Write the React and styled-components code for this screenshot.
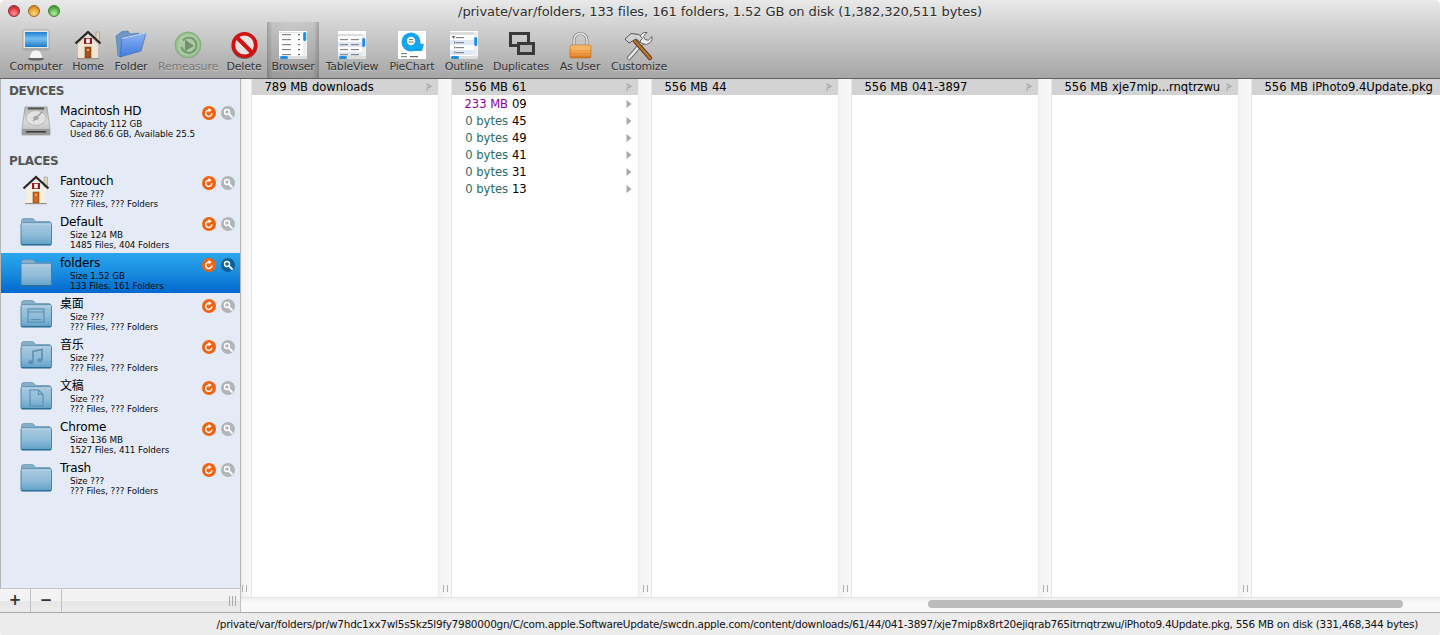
import React from "react";
import styled, { createGlobalStyle } from "styled-components";

const Global = createGlobalStyle`
  html, body { margin: 0; padding: 0; background: #fff; overflow: hidden; }
  * { box-sizing: border-box; }
`;

const FONT = '"DejaVu Sans", "Noto Sans CJK SC", sans-serif';

const Window = styled.div`
  width: 1440px; height: 635px; display: flex; flex-direction: column;
  font-family: ${FONT}; color: #000; overflow: hidden;
  border-radius: 5px 5px 4px 4px; background: #ececec;
`;
const Header = styled.header`
  height: 78px; flex: none; display: flex; flex-direction: column;
  background: linear-gradient(180deg, #e9e9e9 0%, #d4d4d4 30%, #bdbdbd 65%, #a6a6a6 100%);
`;
const TitleBar = styled.div`
  height: 22px; flex: none; display: flex; align-items: center; padding-left: 8px; position: relative;
`;
const Lights = styled.div`display: flex; gap: 8px;`;
const Light = styled.span`
  width: 12px; height: 12px; border-radius: 50%;
  border: 1px solid ${(p) => p.$edge};
  background: radial-gradient(circle at 50% 75%, ${(p) => p.$glow} 0%, ${(p) => p.$c} 55%, ${(p) => p.$dark} 100%);
`;
const Title = styled.div`
  position: absolute; left: 0; right: 0; top: 0; height: 22px; line-height: 23px; text-align: center;
  font-size: 13px; letter-spacing: -0.08px; color: #2e2e2e; text-shadow: 0 1px 0 rgba(255,255,255,.5);
`;
const Toolbar = styled.div`display: flex; flex: 1; padding-left: 8px;`;
const Tool = styled.div`
  width: ${(p) => p.$w}px; margin-left: ${(p) => p.$ml || 0}px; padding-top: 7px;
  display: flex; flex-direction: column; align-items: center;
  background: ${(p) => (p.$active ? "linear-gradient(90deg, rgba(0,0,0,.24), rgba(0,0,0,.08) 10%, rgba(0,0,0,.05) 50%, rgba(0,0,0,.08) 90%, rgba(0,0,0,.24))" : "none")};
`;
const ToolIcon = styled.div`
  width: 32px; height: 32px; display: flex; align-items: center; justify-content: center;
  & svg { display: block; overflow: visible; }
`;
const ToolLabel = styled.div`
  font-size: 11px; line-height: 12px; white-space: nowrap; letter-spacing: -0.2px;
  color: ${(p) => (p.$dim ? "#777" : "#333")}; text-shadow: 0 1px 0 rgba(255,255,255,.35);
`;
const Main = styled.div`
  flex: 1; min-height: 0; display: flex; border-top: 1px solid #5f5f5f; background: #fff;
`;
const Sidebar = styled.aside`
  width: 241px; flex: none; display: flex; flex-direction: column;
`;
const SideList = styled.div`
  flex: 1; min-height: 0; background: #e4ebf6;
  border-left: 1px solid #b4b4b4; border-right: 1px solid #b4b4b4;
`;
const SectionLabel = styled.div`
  height: ${(p) => p.$h}px; padding-left: 8px; display: flex; align-items: flex-end; padding-bottom: 3px;
  font-size: 12px; font-weight: bold; letter-spacing: -0.35px; color: #555; line-height: 14px;
`;
const Row = styled.div`
  height: 40px; margin-bottom: 1px; display: flex; padding: 3px 5px 0 19px;
  background: ${(p) => (p.$sel ? "linear-gradient(180deg, #2aa6ee 0%, #1c8fe0 45%, #0068ce 100%)" : "none")};
`;
const RowIcon = styled.div`
  width: 32px; height: 32px; flex: none;
  & svg { display: block; overflow: visible; }
`;
const RowText = styled.div`flex: 1; min-width: 0; margin-left: 8px;`;
const RowName = styled.div`font-size: 12px; line-height: 15px; letter-spacing: -0.15px; white-space: nowrap; color: #000;`;
const RowDetail = styled.div`
  font-size: 8.8px; line-height: 10px; margin-left: 10px; white-space: nowrap; letter-spacing: -0.1px; color: #0c0c0c;
`;
const RowActions = styled.div`display: flex; gap: 5px; margin-top: 2px; height: 14px; flex: none;`;
const SideFoot = styled.div`
  height: 24px; flex: none; display: flex; border-top: 1px solid #c4c4c4;
  background: linear-gradient(180deg, #f4f4f4 0%, #f2f2f2 50%, #e6e6e6 51%, #ececec 100%);
`;
const FootBtn = styled.div`
  width: 31px; flex: none; display: flex; align-items: center; justify-content: center;
  border-right: 1px solid #c2c2c2; font-size: 15px; font-weight: bold; color: #333; line-height: 1;
`;
const FootFill = styled.div`flex: 1; display: flex; align-items: center; justify-content: flex-end; padding-right: 4px; border-right: 1px solid #c2c2c2;`;
const Grip = styled.div`
  width: 7px; height: 10px; border-left: 1px solid #aaa; border-right: 1px solid #aaa;
  &::after { content: ""; display: block; width: 1px; height: 10px; background: #aaa; margin-left: 2px; }
`;
const Browser = styled.section`flex: 1; min-width: 0; display: flex; flex-direction: column;`;
const Columns = styled.div`flex: 1; min-height: 0; display: flex; overflow: hidden;`;
const Gutter = styled.div`
  width: ${(p) => p.$w}px; flex: none; display: flex; align-items: flex-end; padding: 0 0 5px ${(p) => p.$pad}px;
  background: linear-gradient(90deg, #f3f3f3, #f9f9f9);
  border-left: 1px solid #ececec; border-right: 1px solid #e8e8e8;
`;
const Handle = styled.div`width: 5px; height: 7px; border-left: 1px solid #b0b0b0; border-right: 1px solid #b0b0b0;`;
const Column = styled.div`width: ${(p) => p.$w}px; flex: none; display: flex; flex-direction: column;`;
const ColRow = styled.div`
  height: ${(p) => (p.$head ? 16 : 17)}px; display: flex; align-items: center; padding-right: 6px; flex: none;
  font-size: 11.6px; letter-spacing: -0.05px; white-space: nowrap;
  background: ${(p) => (p.$head ? "#d3d3d3" : "none")};
`;
const Size = styled.span`
  width: 56px; flex: none; text-align: right; color: ${(p) => p.$c || "#000"};
`;
const Name = styled.span`flex: 1; min-width: 0; margin-left: 4px;`;
const Track = styled.div`
  height: 15px; flex: none; display: flex; align-items: flex-start; padding-top: 2px;
  background: linear-gradient(180deg, #f0f0f0, #fafafa 40%, #f6f6f6); border-top: 1px solid #e3e3e3;
`;
const Thumb = styled.div`width: 475px; height: 8px; margin-left: 687px; border-radius: 4px; background: #bbb;`;
const Status = styled.footer`
  height: 23px; flex: none; display: flex; align-items: center; justify-content: flex-end; padding-right: 22px;
  background: #ececec; border-top: 1px solid #a8a8a8;
  font-size: 10.5px; letter-spacing: -0.26px; color: #111; white-space: nowrap;
`;

function Arrow(props) {
  return (
    <svg width="6" height="8" viewBox="0 0 6 8">
      <path d={props.head ? "M.5 .5 5.5 3.5 1.2 5V8" : "M.5 0 5.5 4 .5 8Z"} fill={props.head ? "#bdbdbd" : "#a9a9a9"} stroke={props.head ? "#9a9a9a" : "none"} strokeWidth=".7" />
    </svg>
  );
}

function Computer() {
  return (
    <svg width="32" height="32" viewBox="0 0 32 32">
      <defs>
        <linearGradient id="g-screen" x1="0" y1="0" x2="0" y2="1">
          <stop offset="0" stopColor="#1f7fd0" />
          <stop offset=".45" stopColor="#78bfee" />
          <stop offset="1" stopColor="#1d79c6" />
        </linearGradient>
      </defs>
      <ellipse cx="16" cy="30" rx="8" ry="1.6" fill="#000" opacity=".45" />
      <path d="M10 29c0-5 3-8 6-8s6 3 6 8z" fill="#f4f4f4" />
      <rect x="3" y="1" width="26" height="20" rx="1" fill="#e6e6e6" stroke="#8a8a8a" strokeWidth=".6" />
      <rect x="5" y="3" width="22" height="15" fill="url(#g-screen)" />
      <rect x="3.3" y="19" width="25.4" height="2" fill="#aaa" />
    </svg>
  );
}

function House(props) {
  const door = props.door || "#a9501f";
  const wall = props.wall || "#efe5d2";
  return (
    <svg width="32" height="32" viewBox="0 0 32 32">
      <rect x="24" y="3" width="3.4" height="10" fill="#e2d4bc" stroke="#776" strokeWidth=".4" />
      <path d="M6 15 16 6 26 15V29H6Z" fill={wall} />
      <path d="M3.5 14.5 16 3 28.5 14.5" fill="none" stroke="#2b2420" strokeWidth="2.2" />
      <rect x="12" y="9" width="8" height="6" fill="#8d1f22" />
      <rect x="14.2" y="9.8" width="3.6" height="4.4" fill="#f1f1f1" />
      <rect x="13" y="18" width="6" height="11" fill={door} stroke="#5b2c12" strokeWidth=".5" />
      <rect x="15" y="20" width="2" height="2" fill="#e5b05e" />
      <rect x="5" y="29" width="22" height="1.2" fill="#9a9385" />
    </svg>
  );
}

function BlueFolder() {
  return (
    <svg width="32" height="32" viewBox="0 0 32 32">
      <defs>
        <linearGradient id="g-blue" x1="0" y1="0" x2="0" y2="1">
          <stop offset="0" stopColor="#8cb4f2" />
          <stop offset="1" stopColor="#3f7be0" />
        </linearGradient>
      </defs>
      <path d="M1 7 7 2.5 13 2 15 5 24 4 23 9 6 28 3 27Z" fill="#6f96c8" stroke="#4a6a98" strokeWidth=".5" />
      <path d="M7 9.5 31 4 26 22 5 28Z" fill="url(#g-blue)" stroke="#3565b5" strokeWidth=".6" />
      <path d="M7 9.5 31 4" stroke="#cfe0fb" strokeWidth="1" />
    </svg>
  );
}

function Remeasure() {
  return (
    <svg width="32" height="32" viewBox="0 0 32 32" opacity=".9">
      <circle cx="16" cy="16" r="13" fill="#8fbb85" stroke="#79a673" strokeWidth=".8" />
      <circle cx="16" cy="16" r="11" fill="#a6cd9c" />
      <path d="M11 11.5A7.6 7.6 0 1 1 9.5 18" fill="none" stroke="#6e8f6b" strokeWidth="1.8" />
      <path d="M13 10.5 22 17 13 22Z" fill="#6f8a6b" />
    </svg>
  );
}

function NoSign() {
  return (
    <svg width="32" height="32" viewBox="0 0 32 32">
      <circle cx="16.5" cy="17" r="13" fill="#222" opacity=".5" />
      <circle cx="16.5" cy="16" r="11" fill="#e9e4e2" />
      <path d="M8.5 8 24.5 24" stroke="#d21212" strokeWidth="4" />
      <circle cx="16.5" cy="16" r="11.2" fill="none" stroke="#d21212" strokeWidth="3.6" />
    </svg>
  );
}

function Lines(props) {
  const c = props.c || "#888";
  return (
    <>
      {props.ys.map((y) => (
        <rect key={y} x={props.x} y={y} width={props.w} height="1.2" fill={c} />
      ))}
    </>
  );
}

function Slider(props) {
  return (
    <>
      <rect x="24" y={props.top} width="3.6" height={25 - props.top} fill="#eee" />
      <rect x="24.2" y={props.knob} width="3" height="9" rx="1.5" fill="#1f8fe0" />
      <rect y="25" width="28" height="3" fill="#ddd" />
      <rect x="1" y="25" width="8" height="3" rx="1.5" fill="#1f8fe0" />
    </>
  );
}

function ThumbBrowser() {
  return (
    <svg width="28" height="28" viewBox="0 0 28 28">
      <rect width="28" height="28" fill="#fff" />
      <rect y="1" width="28" height="1" fill="#e4e4e4" />
      <Lines x={3} ys={[3, 8, 13, 18, 23]} w={9} />
      <Lines x={19} ys={[3, 8, 13, 18, 23]} w={2} c="#666" />
      <Slider top={1} knob={1} />
    </svg>
  );
}

function ThumbTable() {
  return (
    <svg width="28" height="28" viewBox="0 0 28 28">
      <rect width="28" height="28" fill="#fff" />
      <rect y="11" width="24" height="5" fill="#dfe8f6" />
      <rect y="21" width="24" height="4" fill="#dfe8f6" />
      <rect y="3" width="24" height="2" fill="#ddd" />
      <Lines x={2} ys={[8, 13, 18, 23]} w={8} />
      <Lines x={13} ys={[8, 13, 18, 23]} w={8} />
      <Slider top={3} knob={7} />
    </svg>
  );
}

function ThumbPie() {
  return (
    <svg width="28" height="28" viewBox="0 0 28 28">
      <rect width="28" height="28" fill="#fff" />
      <circle cx="13" cy="11" r="9.5" fill="#13a6ee" />
      <path d="M17 12 26 13 24 20 15 20Z" fill="#13a6ee" />
      <circle cx="13" cy="10" r="4.2" fill="#f2fbff" />
      <rect x="11" y="8" width="4" height="1" fill="#777" />
      <rect x="10.5" y="10.5" width="5" height="1" fill="#777" />
      <Lines x={3} ys={[22, 25]} w={6} c="#888" />
      <Lines x={12} ys={[25]} w={8} c="#666" />
    </svg>
  );
}

function ThumbOutline() {
  return (
    <svg width="28" height="28" viewBox="0 0 28 28">
      <rect width="28" height="28" fill="#fff" />
      <rect y="1" width="24" height="3" fill="#ddd" />
      <rect y="9" width="24" height="5" fill="#dfe8f6" />
      <rect y="19" width="24" height="5" fill="#dfe8f6" />
      <Lines x={6} ys={[6, 11, 16, 21]} w={8} />
      <path d="M2 5h3L3.5 8Z" fill="#555" />
      <path d="M4 10v3l2-1.5ZM4 15v3l2-1.5ZM4 20v3l2-1.5Z" fill="#888" />
      <Slider top={1} knob={6} />
    </svg>
  );
}

function Duplicates() {
  return (
    <svg width="32" height="32" viewBox="0 0 32 32">
      <path d="M12 16.5H5.5V4.5H23.5V13" fill="none" stroke="#383838" strokeWidth="3" />
      <rect x="13.5" y="14.5" width="15" height="10" fill="#b3b3b3" stroke="#383838" strokeWidth="3" />
    </svg>
  );
}

function Lock() {
  return (
    <svg width="32" height="32" viewBox="0 0 32 32">
      <defs>
        <linearGradient id="g-lock" x1="0" y1="0" x2="0" y2="1">
          <stop offset="0" stopColor="#f6c274" />
          <stop offset=".5" stopColor="#ef9b3a" />
          <stop offset="1" stopColor="#d9721d" />
        </linearGradient>
      </defs>
      <path d="M10 17V11a6.5 6.5 0 0 1 13 0v6" fill="none" stroke="#8f8f8f" strokeWidth="3.2" />
      <path d="M10 17V11a6.5 6.5 0 0 1 13 0v6" fill="none" stroke="#e9e9e9" strokeWidth="1.4" />
      <rect x="6" y="16" width="21" height="13" rx="1.5" fill="url(#g-lock)" stroke="#b96a22" strokeWidth=".6" />
      <path d="M6.5 20H26.5M6.5 23H26.5M6.5 26H26.5" stroke="#fff" strokeOpacity=".25" strokeWidth=".8" />
    </svg>
  );
}

function Tools() {
  return (
    <svg width="32" height="32" viewBox="0 0 32 32">
      <path d="M6 29 20 13" stroke="#666" strokeWidth="4.2" strokeLinecap="round" />
      <path d="M6 29 20 13" stroke="#eaeaea" strokeWidth="2.6" strokeLinecap="round" />
      <path d="M18 14a6.5 6.5 0 0 1 6-10.5L20.5 7.5l1.5 3 3.5.8 3.5-4a6.5 6.5 0 0 1-9 7.5Z" fill="#f0f0f0" stroke="#666" strokeWidth="1" />
      <path d="M27 29 12 12" stroke="#5a3415" strokeWidth="4.2" strokeLinecap="round" />
      <path d="M27 29 12 12" stroke="#b87530" strokeWidth="2.6" strokeLinecap="round" />
      <path d="M2 10 8 4.5l8 1 3.5 4-3 3-3.5-2.6-4 2.4L6 14Z" fill="#d2d2d2" stroke="#555" strokeWidth="1" />
    </svg>
  );
}

function HardDrive() {
  return (
    <svg width="32" height="32" viewBox="0 0 32 32">
      <defs>
        <linearGradient id="g-hd" x1="0" y1="0" x2="0" y2="1">
          <stop offset="0" stopColor="#b4b4b4" />
          <stop offset=".5" stopColor="#dcdcdc" />
          <stop offset="1" stopColor="#b8b8b8" />
        </linearGradient>
      </defs>
      <path d="M5 3H27L30 25V31H2V25Z" fill="url(#g-hd)" stroke="#8d8d8d" strokeWidth=".6" />
      <rect x="8" y="3.5" width="16" height="2" fill="#555" />
      <ellipse cx="16" cy="14" rx="10" ry="7.5" fill="#e2e2e2" stroke="#a5a5a5" strokeWidth=".6" />
      <ellipse cx="16" cy="14" rx="2.5" ry="1.8" fill="#bbb" stroke="#888" strokeWidth=".5" />
      <path d="M22 8 13 17" stroke="#999" strokeWidth="1.2" />
      <rect x="2" y="25" width="28" height="6" fill="#9a9a9a" />
      <rect x="6" y="27" width="20" height="1.6" fill="#3e3e3e" />
    </svg>
  );
}

function Folder(props) {
  const g = "#5c8fb2";
  const glyph = props.glyph;
  return (
    <svg width="32" height="32" viewBox="0 0 32 32">
      <defs>
        <linearGradient id="g-folder" x1="0" y1="0" x2="0" y2="1">
          <stop offset="0" stopColor="#a9c9df" />
          <stop offset=".55" stopColor="#8fbbd9" />
          <stop offset="1" stopColor="#5fa0c6" />
        </linearGradient>
      </defs>
      <path d="M1.5 9V5.5Q1.5 3.5 4 3.5H12Q13.5 3.5 14.5 5L15.5 6.5H29Q31 6.5 31 8.5V12H1.5Z" fill="#86aecb" stroke="#5d8cab" strokeWidth=".6" />
      <rect x="1" y="8" width="30.5" height="22" rx="1.5" fill="url(#g-folder)" stroke="#3c7da4" strokeWidth=".9" />
      <path d="M1.5 8.8H31" stroke="#d2e4f0" strokeWidth=".8" />
      <path d="M1.5 29.6H31" stroke="#2b6c94" strokeWidth="1.2" />
      {glyph === "desktop" ? (
        <g>
          <rect x="8" y="12" width="16" height="13" fill="none" stroke={g} strokeWidth="1.2" />
          <path d="M8 15H24M11 22.5H21" stroke={g} strokeWidth="1.2" />
        </g>
      ) : null}
      {glyph === "music" ? (
        <g>
          <path d="M13 24V13.5L22 11.5V22" fill="none" stroke={g} strokeWidth="1.6" />
          <ellipse cx="10.8" cy="24.3" rx="2.6" ry="2" fill={g} />
          <ellipse cx="19.8" cy="22.3" rx="2.6" ry="2" fill={g} />
        </g>
      ) : null}
      {glyph === "doc" ? (
        <path d="M10 11H18.5L23 15.5V27H10ZM18.5 11V15.5H23" fill="none" stroke={g} strokeWidth="1.2" />
      ) : null}
    </svg>
  );
}

function Refresh() {
  return (
    <svg width="14" height="14" viewBox="0 0 14 14">
      <circle cx="7" cy="7" r="7" fill="#f3620f" />
      <path d="M9.9 7.3A3.1 3.1 0 1 1 7 4.2" fill="none" stroke="#fff" strokeWidth="1.5" />
      <path d="M6.6 1.8 9.6 4.2 6.6 6.4Z" fill="#fff" />
    </svg>
  );
}

function Search(props) {
  return (
    <svg width="14" height="14" viewBox="0 0 14 14">
      <circle cx="7" cy="7" r="7" fill={props.sel ? "#0f5e9c" : "#b1b4b8"} />
      <circle cx="6" cy="6" r="2.5" fill="none" stroke="#fff" strokeWidth="1.4" />
      <path d="M8 8 11 11" stroke="#fff" strokeWidth="1.8" strokeLinecap="round" />
    </svg>
  );
}

const tools = [
  { label: "Computer", w: 56, icon: <Computer /> },
  { label: "Home", w: 48, icon: <House /> },
  { label: "Folder", w: 38, icon: <BlueFolder /> },
  { label: "Remeasure", w: 76, icon: <Remeasure />, dim: true },
  { label: "Delete", w: 36, icon: <NoSign /> },
  { label: "Browser", w: 52, ml: 5, active: true, icon: <ThumbBrowser /> },
  { label: "TableView", w: 66, icon: <ThumbTable /> },
  { label: "PieChart", w: 54, icon: <ThumbPie /> },
  { label: "Outline", w: 50, icon: <ThumbOutline /> },
  { label: "Duplicates", w: 64, icon: <Duplicates /> },
  { label: "As User", w: 54, icon: <Lock /> },
  { label: "Customize", w: 64, icon: <Tools /> },
];

const places = [
  { name: "Fantouch", a: "Size ???", b: "??? Files, ??? Folders", icon: <House door="#d9671d" wall="#f5efe2" /> },
  { name: "Default", a: "Size 124 MB", b: "1485 Files, 404 Folders", icon: <Folder /> },
  { name: "folders", a: "Size 1.52 GB", b: "133 Files, 161 Folders", icon: <Folder />, sel: true },
  { name: "桌面", a: "Size ???", b: "??? Files, ??? Folders", icon: <Folder glyph="desktop" /> },
  { name: "音乐", a: "Size ???", b: "??? Files, ??? Folders", icon: <Folder glyph="music" /> },
  { name: "文稿", a: "Size ???", b: "??? Files, ??? Folders", icon: <Folder glyph="doc" /> },
  { name: "Chrome", a: "Size 136 MB", b: "1527 Files, 411 Folders", icon: <Folder /> },
  { name: "Trash", a: "Size ???", b: "??? Files, ??? Folders", icon: <Folder /> },
];

const TEAL = "#2b6b6b";
const columns = [
  { head: ["789 MB", "downloads"], rows: [] },
  {
    head: ["556 MB", "61"],
    rows: [
      ["233 MB", "09", "#8a00a8"],
      ["0 bytes", "45", TEAL],
      ["0 bytes", "49", TEAL],
      ["0 bytes", "41", TEAL],
      ["0 bytes", "31", TEAL],
      ["0 bytes", "13", TEAL],
    ],
  },
  { head: ["556 MB", "44"], rows: [] },
  { head: ["556 MB", "041-3897"], rows: [] },
  { head: ["556 MB", "xje7mip...rnqtrzwu"], rows: [] },
  { head: ["556 MB", "iPhoto9.4Update.pkg"], rows: [], last: true },
];

function SideRow(props) {
  return (
    <Row $sel={props.sel}>
      <RowIcon>{props.icon}</RowIcon>
      <RowText>
        <RowName>{props.name}</RowName>
        <RowDetail>{props.a}</RowDetail>
        <RowDetail>{props.b}</RowDetail>
      </RowText>
      <RowActions>
        <Refresh />
        <Search sel={props.sel} />
      </RowActions>
    </Row>
  );
}

function App() {
  return (
    <Window>
      <Global />
      <Header>
        <TitleBar>
          <Lights>
            <Light $c="#e0404a" $glow="#f59aa0" $dark="#a81e28" $edge="#8e2a30" />
            <Light $c="#e9a12e" $glow="#f9d98a" $dark="#b56e10" $edge="#96682a" />
            <Light $c="#5db54e" $glow="#b5eca0" $dark="#2f8127" $edge="#3f7d38" />
          </Lights>
          <Title>/private/var/folders, 133 files, 161 folders, 1.52 GB on disk (1,382,320,511 bytes)</Title>
        </TitleBar>
        <Toolbar>
          {tools.map((t) => (
            <Tool key={t.label} $w={t.w} $ml={t.ml} $active={t.active}>
              <ToolIcon>{t.icon}</ToolIcon>
              <ToolLabel $dim={t.dim}>{t.label}</ToolLabel>
            </Tool>
          ))}
        </Toolbar>
      </Header>
      <Main>
        <Sidebar>
          <SideList>
            <SectionLabel $h={22}>DEVICES</SectionLabel>
            <SideRow name="Macintosh HD" a="Capacity 112 GB" b="Used 86.6 GB, Available 25.5" icon={<HardDrive />} />
            <SectionLabel $h={29}>PLACES</SectionLabel>
            {places.map((p) => (
              <SideRow key={p.name} name={p.name} a={p.a} b={p.b} icon={p.icon} sel={p.sel} />
            ))}
          </SideList>
          <SideFoot>
            <FootBtn>+</FootBtn>
            <FootBtn>−</FootBtn>
            <FootFill>
              <Grip />
            </FootFill>
          </SideFoot>
        </Sidebar>
        <Browser>
          <Columns>
            {columns.map((c, i) => (
              <React.Fragment key={i}>
                <Gutter $w={i === 0 ? 11 : 14} $pad={i === 0 ? 0 : 4}>
                  <Handle />
                </Gutter>
                <Column $w={c.last ? 188 : 186}>
                  <ColRow $head>
                    <Size>{c.head[0]}</Size>
                    <Name>{c.head[1]}</Name>
                    {c.last ? null : <Arrow head />}
                  </ColRow>
                  {c.rows.map((r) => (
                    <ColRow key={r[1]}>
                      <Size $c={r[2]}>{r[0]}</Size>
                      <Name>{r[1]}</Name>
                      <Arrow />
                    </ColRow>
                  ))}
                </Column>
              </React.Fragment>
            ))}
          </Columns>
          <Track>
            <Thumb />
          </Track>
        </Browser>
      </Main>
      <Status>/private/var/folders/pr/w7hdc1xx7wl5s5kz5l9fy7980000gn/C/com.apple.SoftwareUpdate/swcdn.apple.com/content/downloads/61/44/041-3897/xje7mip8x8rt20ejiqrab765itrnqtrzwu/iPhoto9.4Update.pkg, 556 MB on disk (331,468,344 bytes)</Status>
    </Window>
  );
}

export default App;
